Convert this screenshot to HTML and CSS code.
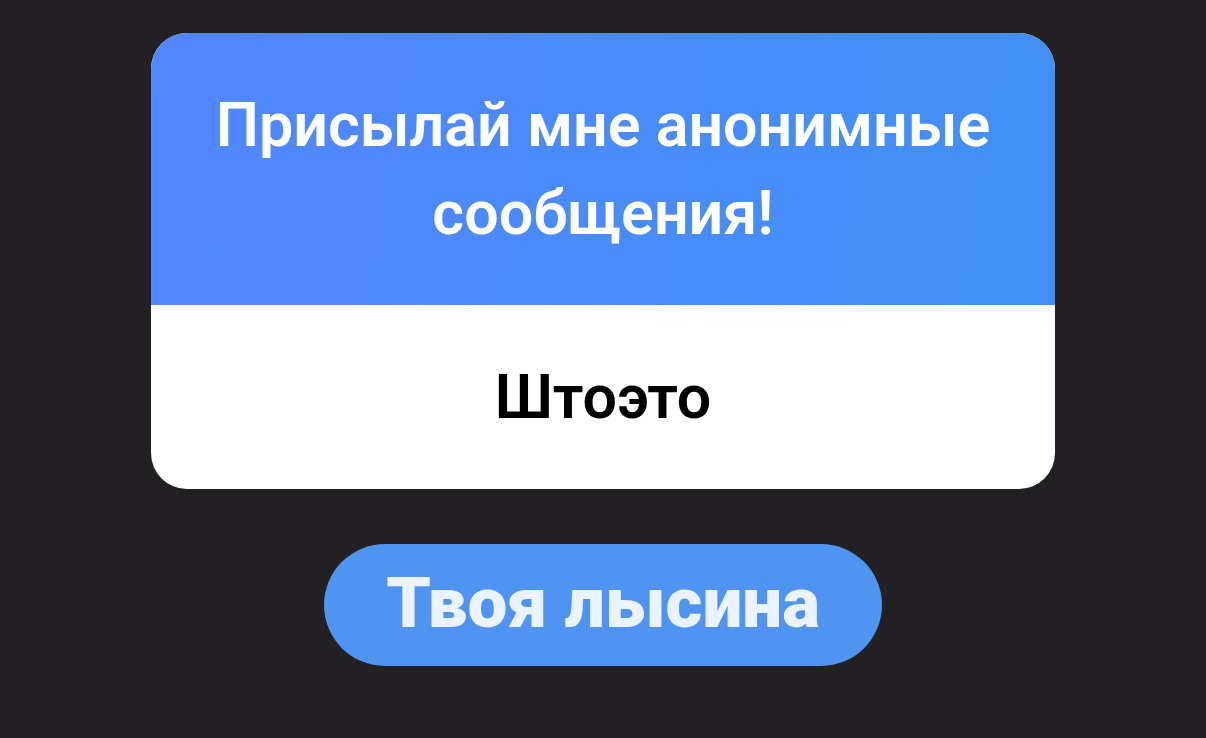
FILE: index.html
```
<!DOCTYPE html>
<html lang="ru">
<head>
    <meta charset="UTF-8">
    <meta name="viewport" content="width=device-width, initial-scale=1.0">
    <title>Анонимные сообщения</title>
    <link rel="stylesheet" href="styles.css">
</head>
<body>
    <main class="story">
        <section class="card">
            <h1 class="card-title">Присылай мне анонимные сообщения!</h1>
            <p class="card-message">Штоэто</p>
        </section>
        <p class="reply">Твоя лысина</p>
    </main>
</body>
</html>
```
FILE: styles.css
```
* {
    box-sizing: border-box;
}
body {
    margin: 0;
    min-height: 100vh;
    background-color: #222023;
    font-family: Roboto, "Noto Sans", sans-serif;
}
.story {
    display: flex;
    flex-direction: column;
    align-items: center;
    gap: 55px;
    padding: 33px 0;
}
.card {
    width: 75%;
    border-radius: 36px;
    overflow: hidden;
    background: white;
    text-align: center;
}
.card-title,
.card-message {
    margin: 0;
    padding: 48px;
    font-size: 61px;
    font-weight: 600;
    line-height: 88px;
}
.card-title {
    background: linear-gradient(100deg, #5386ff, #4090f4);
    color: white;
}
.card-message {
    color: black;
}
.reply {
    margin: 0;
    padding: 14px 62px 18px;
    border-radius: 61px;
    background: #4e94f0;
    color: #eaf3ff;
    font-size: 71px;
    font-weight: 900;
    line-height: 90px;
}

@media (max-width: 800px) {
    .card {
        width: 90%;
    }
    .card-title,
    .card-message {
        padding: 24px;
        font-size: 32px;
        line-height: 48px;
    }
    .reply {
        padding: 8px 32px;
        font-size: 36px;
        line-height: 48px;
    }
}
```
